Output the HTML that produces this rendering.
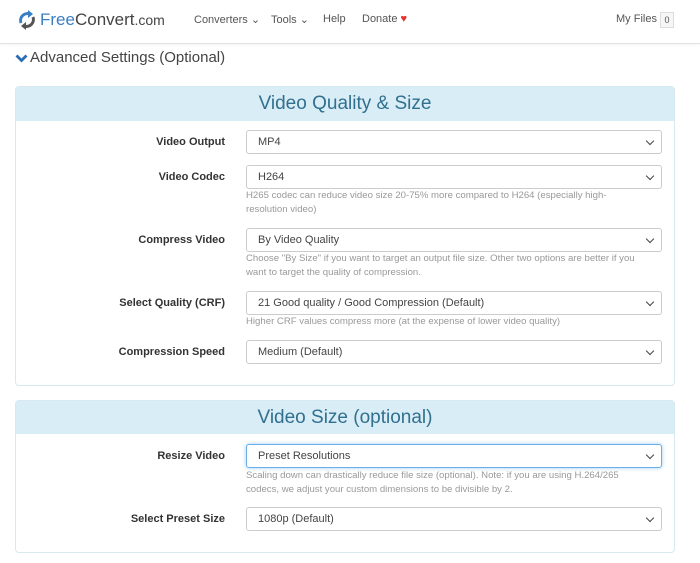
<!DOCTYPE html><html><head><style>
*{box-sizing:border-box;margin:0;padding:0}
body{width:700px;height:563px;background:#fff;font-family:"Liberation Sans",sans-serif;position:relative;overflow:hidden;color:#333}
.a{position:absolute}
.nav{left:0;top:0;width:700px;height:44px;border-bottom:1px solid #e2e2e2;box-shadow:0 1px 2px rgba(0,0,0,.05)}
.ni{font-size:11px;color:#555;top:13px;white-space:nowrap}
.card{left:15px;width:660px;border:1px solid #d6e9f0;border-radius:4px}
.hd{left:0;top:0;width:100%;background:#d9edf7;color:#31708f;font-size:19px;text-align:center}
.lb{right:475px;font-size:11px;font-weight:bold;color:#333;text-align:right;white-space:nowrap}
.sel{left:246px;width:416px;height:24px;border:1px solid #ccc;border-radius:3px;font-size:11px;color:#444;padding:5px 11px;background:#fff}
.sel:after{content:"";position:absolute;right:8px;top:7px;width:5px;height:5px;border-right:1.5px solid #444;border-bottom:1.5px solid #444;transform:rotate(45deg)}
.hp{left:246px;width:395px;font-size:9.6px;color:#999;line-height:14px}
</style></head><body>
<div class="a nav">
<svg class="a" style="left:17px;top:9px" width="20" height="22" viewBox="0 0 20 22"><path d="M4 14 A7 7 0 0 1 13 5" stroke="#3a7fc4" stroke-width="3" fill="none"/><path d="M11 1 L16 5 L11 9Z" fill="#3a7fc4"/><path d="M16 8 A7 7 0 0 1 7 17" stroke="#555" stroke-width="3" fill="none"/><path d="M9 13 L4 17 L9 21Z" fill="#555"/></svg>
<div class="a" style="left:40px;top:10px;font-size:17px;color:#444"><span style="color:#3a7fc4">Free</span>Convert<span style="font-size:14px">.com</span></div>
<div class="a ni" style="left:194px">Converters ⌄</div>
<div class="a ni" style="left:271px">Tools ⌄</div>
<div class="a ni" style="left:323px">Help</div>
<div class="a ni" style="left:362px">Donate <span style="color:#e8312c">♥</span></div>
<div class="a ni" style="left:616px">My Files</div>
<div class="a" style="left:660px;top:12px;width:14px;height:16px;border:1px solid #ddd;background:#f6f6f6;font-size:9px;color:#555;text-align:center;line-height:14px">0</div>
</div>
<svg class="a" style="left:15px;top:54px" width="13" height="9" viewBox="0 0 13 9"><path d="M1.5 1.5 L6.5 6.5 L11.5 1.5" stroke="#2a6db5" stroke-width="2.8" fill="none"/></svg>
<div class="a" style="left:30px;top:49px;font-size:15px;color:#444">Advanced Settings (Optional)</div>
<div class="a card" style="top:86px;height:300px">
<div class="a hd" style="height:34px;line-height:34px">Video Quality &amp; Size</div>
</div>
<div class="a card" style="top:400px;height:153px">
<div class="a hd" style="height:33px;line-height:33px">Video Size (optional)</div>
</div>
<div class="a lb" style="top:136px">Video Output</div><div class="a sel" style="top:130px">MP4</div>
<div class="a lb" style="top:171px">Video Codec</div><div class="a sel" style="top:165px">H264</div>
<div class="a hp" style="top:189px">H265 codec can reduce video size 20-75% more compared to H264 (especially high-resolution video)</div>
<div class="a lb" style="top:234px">Compress Video</div><div class="a sel" style="top:228px">By Video Quality</div>
<div class="a hp" style="top:252px">Choose "By Size" if you want to target an output file size. Other two options are better if you want to target the quality of compression.</div>
<div class="a lb" style="top:297px">Select Quality (CRF)</div><div class="a sel" style="top:291px">21 Good quality / Good Compression (Default)</div>
<div class="a hp" style="top:315px">Higher CRF values compress more (at the expense of lower video quality)</div>
<div class="a lb" style="top:346px">Compression Speed</div><div class="a sel" style="top:340px">Medium (Default)</div>
<div class="a lb" style="top:450px">Resize Video</div><div class="a sel" style="top:444px;border-color:#66afe9;box-shadow:0 0 4px rgba(102,175,233,.6)">Preset Resolutions</div>
<div class="a hp" style="top:469px">Scaling down can drastically reduce file size (optional). Note: if you are using H.264/265 codecs, we adjust your custom dimensions to be divisible by 2.</div>
<div class="a lb" style="top:513px">Select Preset Size</div><div class="a sel" style="top:507px">1080p (Default)</div>
</body></html>
